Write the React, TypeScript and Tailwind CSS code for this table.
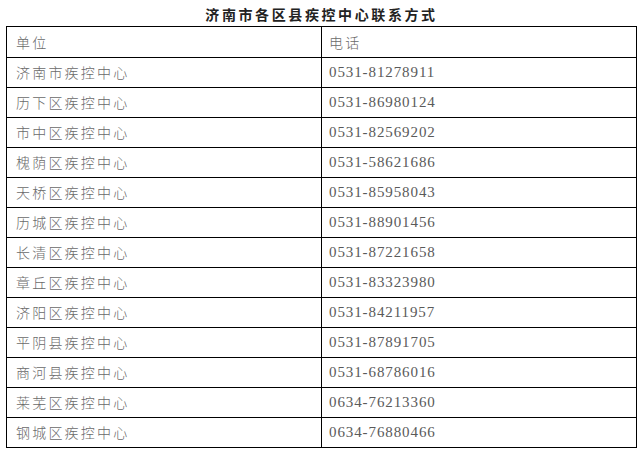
const rows: [string, string][] = [
  ['济南市疾控中心', '0531-81278911'],
  ['历下区疾控中心', '0531-86980124'],
  ['市中区疾控中心', '0531-82569202'],
  ['槐荫区疾控中心', '0531-58621686'],
  ['天桥区疾控中心', '0531-85958043'],
  ['历城区疾控中心', '0531-88901456'],
  ['长清区疾控中心', '0531-87221658'],
  ['章丘区疾控中心', '0531-83323980'],
  ['济阳区疾控中心', '0531-84211957'],
  ['平阴县疾控中心', '0531-87891705'],
  ['商河县疾控中心', '0531-68786016'],
  ['莱芜区疾控中心', '0634-76213360'],
  ['钢城区疾控中心', '0634-76880466'],
]

const cjk = "font-['Noto_Sans_CJK_SC',sans-serif]"

export default function App() {
  return (
    <div className="w-[643px] h-[454px] bg-white">
      <div className={`h-[26px] flex items-center justify-center pt-[2px] text-[14px] font-bold tracking-[2.6px] text-[#222] ${cjk}`}>
        济南市各区县疾控中心联系方式
      </div>
      <div className="ml-[6px] w-[631px] border-[1.5px] border-black">
        <div className="grid grid-cols-[315px_1fr] h-[30px] items-center">
          <div className={`h-full flex items-center pl-[9px] text-[14px] tracking-[2.2px] font-light text-[#6a6a6a] border-r-[1.5px] border-black ${cjk}`}>单位</div>
          <div className={`h-full flex items-center pl-[7px] text-[14px] tracking-[2.2px] font-light text-[#6a6a6a] ${cjk}`}>电话</div>
        </div>
        {rows.map(([name, tel]) => (
          <div key={name} className="grid grid-cols-[315px_1fr] h-[30px] border-t-[1.5px] border-black">
            <div className={`h-full flex items-center pl-[9px] text-[14px] tracking-[2.2px] font-light text-[#6a6a6a] border-r-[1.5px] border-black ${cjk}`}>{name}</div>
            <div className="h-full flex items-center pl-[7px] text-[15px] tracking-[0.9px] text-[#5a5a5a] font-['Liberation_Serif',serif]">{tel}</div>
          </div>
        ))}
      </div>
    </div>
  )
}
